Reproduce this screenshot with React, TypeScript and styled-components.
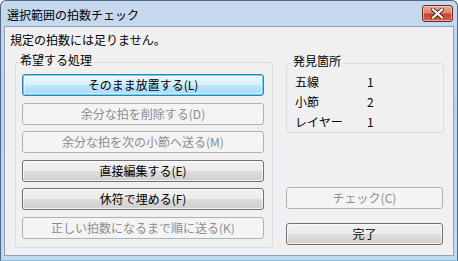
import React from 'react'
import styled, { createGlobalStyle, css } from 'styled-components'

const GlobalStyle = createGlobalStyle`
  html, body {
    margin: 0;
    padding: 0;
    background: #ffffff;
  }
  body {
    font-family: 'Noto Sans CJK JP', 'Noto Sans', sans-serif;
    font-size: 12px;
    color: #000000;
  }
`

const Window = styled.div`
  width: 458px;
  height: 261px;
  box-sizing: border-box;
  display: flex;
  flex-direction: column;
  padding: 0 3px 4px 3px;
  border: 1px solid #4f6886;
  border-bottom-color: #7cc6e6;
  border-radius: 6px 6px 0 0;
  background: linear-gradient(to bottom, #c6d9ef 0%, #bcd2eb 40%, #c5d9ee 100%);
`

const TitleBar = styled.div`
  height: 25px;
  display: flex;
  align-items: center;
  justify-content: space-between;
  padding: 0 0 0 3px;
`

const Title = styled.div`
  font-size: 12px;
  line-height: 16px;
  color: #000000;
  margin-top: 2px;
`

const CloseButton = styled.div`
  width: 31px;
  height: 17px;
  box-sizing: border-box;
  margin-right: 1px;
  align-self: flex-start;
  margin-top: 4px;
  border: 1px solid #6b2a1d;
  border-radius: 3px;
  background: linear-gradient(to bottom, #e9a899 0%, #d98872 45%, #c7452c 55%, #d4664a 100%);
  box-shadow: inset 0 0 0 1px rgba(255, 220, 210, 0.55);
  display: flex;
  align-items: center;
  justify-content: center;
`

const Client = styled.div`
  flex: 1;
  display: flex;
  flex-direction: column;
  border: 1px solid #8ca3bf;
  background: #f0f0f0;
  padding: 5px 9px 7px 5px;
`

const Message = styled.div`
  line-height: 16px;
  margin-bottom: 6px;
`

const MainRow = styled.div`
  flex: 1;
  display: flex;
  gap: 13px;
  padding-left: 5px;
`

const GroupBox = styled.fieldset<{ $width: number; $padLeft: number; $padTop: number }>`
  width: ${({ $width }) => $width}px;
  box-sizing: border-box;
  margin: 0;
  min-width: 0;
  border: 1px solid #d5dfe5;
  border-radius: 3px;
  padding: ${({ $padTop }) => $padTop}px 8px 0 ${({ $padLeft }) => $padLeft}px;
`

const Legend = styled.legend`
  font-size: 12px;
  line-height: 12px;
  padding: 0 2px 4px 2px;
  margin-left: -4px;
`

const ActionList = styled.div`
  display: flex;
  flex-direction: column;
  gap: 6.6px;
`

const Button = styled.div<{ $variant?: 'default' | 'disabled' | 'normal' }>`
  height: 22px;
  box-sizing: border-box;
  border-radius: 3px;
  display: flex;
  align-items: center;
  justify-content: center;
  font-size: 12px;
  line-height: 16px;
  border: 1px solid #707070;
  color: #000000;
  background: linear-gradient(to bottom, #f2f2f2 0%, #ebebeb 50%, #dddddd 51%, #cfcfcf 100%);
  box-shadow: inset 0 0 0 1px rgba(255, 255, 255, 0.7);
  ${({ $variant }) =>
    $variant === 'default' &&
    css`
      border-color: #3c7fb1;
      background: linear-gradient(to bottom, #eaf6fd 0%, #d9f0fc 50%, #bee6fd 51%, #a7d9f5 100%);
      box-shadow: inset 0 0 0 1px #62d2f9, inset 0 0 0 2px rgba(255, 255, 255, 0.5);
    `}
  ${({ $variant }) =>
    $variant === 'disabled' &&
    css`
      border-color: #adb2b5;
      background: #f4f4f4;
      color: #8d8d8d;
      box-shadow: none;
    `}
`

const SideColumn = styled.div`
  width: 158px;
  display: flex;
  flex-direction: column;
  padding-top: 1px;
  padding-bottom: 3px;
`

const InfoRow = styled.div`
  display: flex;
  height: 20px;
  align-items: center;
  line-height: 16px;
`

const InfoLabel = styled.span`
  width: 72px;
`

const SideButtons = styled.div`
  margin-top: auto;
  display: flex;
  flex-direction: column;
  gap: 14px;
  width: 157px;
`

const actions: { label: string; variant: 'default' | 'disabled' | 'normal' }[] = [
  { label: 'そのまま放置する(L)', variant: 'default' },
  { label: '余分な拍を削除する(D)', variant: 'disabled' },
  { label: '余分な拍を次の小節へ送る(M)', variant: 'disabled' },
  { label: '直接編集する(E)', variant: 'normal' },
  { label: '休符で埋める(F)', variant: 'normal' },
  { label: '正しい拍数になるまで順に送る(K)', variant: 'disabled' },
]

const found = [
  { label: '五線', value: 1 },
  { label: '小節', value: 2 },
  { label: 'レイヤー', value: 1 },
]

const App = () => {
  return (
    <>
      <GlobalStyle />
      <Window>
        <TitleBar>
          <Title>選択範囲の拍数チェック</Title>
          <CloseButton>
            <svg width="13" height="11" viewBox="0 0 13 11">
              <path d="M2 1.5 L11 9.5 M11 1.5 L2 9.5" stroke="#5a1f14" strokeWidth="4" strokeLinecap="square" />
              <path d="M2 1.5 L11 9.5 M11 1.5 L2 9.5" stroke="#ffffff" strokeWidth="2.2" strokeLinecap="square" />
            </svg>
          </CloseButton>
        </TitleBar>
        <Client>
          <Message>規定の拍数には足りません。</Message>
          <MainRow>
            <GroupBox $width={258} $padLeft={6} $padTop={4}>
              <Legend>希望する処理</Legend>
              <ActionList>
                {actions.map((a) => (
                  <Button key={a.label} $variant={a.variant}>
                    {a.label}
                  </Button>
                ))}
              </ActionList>
            </GroupBox>
            <SideColumn>
              <GroupBox $width={158} $padLeft={8} $padTop={1}>
                <Legend>発見箇所</Legend>
                {found.map((f) => (
                  <InfoRow key={f.label}>
                    <InfoLabel>{f.label}</InfoLabel>
                    <span>{f.value}</span>
                  </InfoRow>
                ))}
              </GroupBox>
              <SideButtons>
                <Button $variant="disabled">チェック(C)</Button>
                <Button $variant="normal">完了</Button>
              </SideButtons>
            </SideColumn>
          </MainRow>
        </Client>
      </Window>
    </>
  )
}

export default App
